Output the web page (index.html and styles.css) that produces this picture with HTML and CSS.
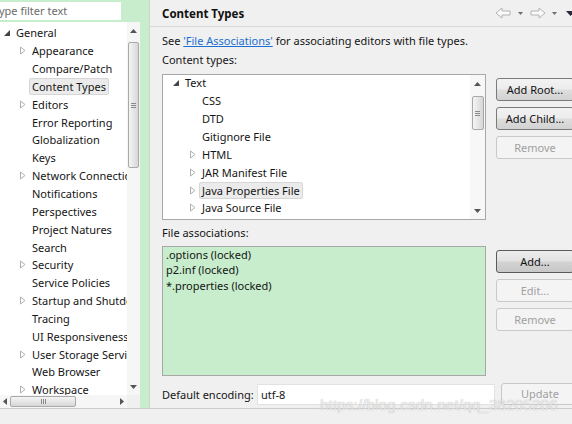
FILE: index.html
```html
<!DOCTYPE html>
<html>
<head>
<meta charset="utf-8">
<link rel="stylesheet" href="styles.css">
</head>
<body>
<div class="main">
  <div class="left">
    <div class="filter"><div class="filter-input"><span>type filter text</span></div></div>
    <div class="tree-wrap">
      <div class="tree-body">
        <div class="tree">
          <div class="row l0"><span class="tw"><svg width="6" height="6"><path d="M6 0 L6 6 L0 6 Z" fill="#444"/></svg></span><span class="lbl">General</span></div>
          <div class="row l1"><span class="tw"><svg width="6" height="9"><path d="M0.5 1 L5 4.5 L0.5 8 Z" fill="#fff" stroke="#b0b0b0"/></svg></span><span class="lbl">Appearance</span></div>
          <div class="row l1"><span class="tw"></span><span class="lbl">Compare/Patch</span></div>
          <div class="row l1"><span class="tw"></span><span class="lbl sel">Content Types</span></div>
          <div class="row l1"><span class="tw"><svg width="6" height="9"><path d="M0.5 1 L5 4.5 L0.5 8 Z" fill="#fff" stroke="#b0b0b0"/></svg></span><span class="lbl">Editors</span></div>
          <div class="row l1"><span class="tw"></span><span class="lbl">Error Reporting</span></div>
          <div class="row l1"><span class="tw"></span><span class="lbl">Globalization</span></div>
          <div class="row l1"><span class="tw"></span><span class="lbl">Keys</span></div>
          <div class="row l1"><span class="tw"><svg width="6" height="9"><path d="M0.5 1 L5 4.5 L0.5 8 Z" fill="#fff" stroke="#b0b0b0"/></svg></span><span class="lbl">Network Connections</span></div>
          <div class="row l1"><span class="tw"></span><span class="lbl">Notifications</span></div>
          <div class="row l1"><span class="tw"></span><span class="lbl">Perspectives</span></div>
          <div class="row l1"><span class="tw"></span><span class="lbl">Project Natures</span></div>
          <div class="row l1"><span class="tw"></span><span class="lbl">Search</span></div>
          <div class="row l1"><span class="tw"><svg width="6" height="9"><path d="M0.5 1 L5 4.5 L0.5 8 Z" fill="#fff" stroke="#b0b0b0"/></svg></span><span class="lbl">Security</span></div>
          <div class="row l1"><span class="tw"></span><span class="lbl">Service Policies</span></div>
          <div class="row l1"><span class="tw"><svg width="6" height="9"><path d="M0.5 1 L5 4.5 L0.5 8 Z" fill="#fff" stroke="#b0b0b0"/></svg></span><span class="lbl">Startup and Shutdown</span></div>
          <div class="row l1"><span class="tw"></span><span class="lbl">Tracing</span></div>
          <div class="row l1"><span class="tw"></span><span class="lbl">UI Responsiveness Monitoring</span></div>
          <div class="row l1"><span class="tw"><svg width="6" height="9"><path d="M0.5 1 L5 4.5 L0.5 8 Z" fill="#fff" stroke="#b0b0b0"/></svg></span><span class="lbl">User Storage Service</span></div>
          <div class="row l1"><span class="tw"></span><span class="lbl">Web Browser</span></div>
          <div class="row l1"><span class="tw"><svg width="6" height="9"><path d="M0.5 1 L5 4.5 L0.5 8 Z" fill="#fff" stroke="#b0b0b0"/></svg></span><span class="lbl">Workspace</span></div>
        </div>
        <div class="vscroll">
          <div class="arr"><svg width="7" height="4"><path d="M0 4 L3.5 0 L7 4 Z" fill="#555"/></svg></div>
          <div class="thumb tall"><span class="grip"></span></div>
          <div class="fill"></div>
          <div class="arr"><svg width="7" height="4"><path d="M0 0 L3.5 4 L7 0 Z" fill="#555"/></svg></div>
        </div>
      </div>
      <div class="hscroll">
        <div class="harr"><svg width="4" height="7"><path d="M4 0 L0 3.5 L4 7 Z" fill="#555"/></svg></div>
        <div class="hthumb"><span class="hgrip"></span></div>
        <div class="fill"></div>
        <div class="harr"><svg width="4" height="7"><path d="M0 0 L4 3.5 L0 7 Z" fill="#555"/></svg></div>
        <div class="corner"></div>
      </div>
    </div>
  </div>
  <div class="sash"></div>
  <div class="right">
    <div class="hdr">
      <span class="title">Content Types</span>
      <svg class="nav" width="80" height="14" viewBox="0 0 80 14">
        <path d="M2 7 L8 2 L8 5 L16 5 L16 9 L8 9 L8 12 Z" fill="#fbfbfb" stroke="#b3b3b3"/>
        <path d="M24 6 L29 6 L26.5 9 Z" fill="#6e6e6e"/>
        <path d="M51 7 L45 2 L45 5 L37 5 L37 9 L45 9 L45 12 Z" fill="#fbfbfb" stroke="#b3b3b3"/>
        <path d="M58 6 L63 6 L60.5 9 Z" fill="#6e6e6e"/>
        <path d="M72 5 L81 5 L76.5 10 Z" fill="#2a2a3a"/>
      </svg>
    </div>
    <div class="body">
      <div class="line">See <a class="link">'File Associations'</a> for associating editors with file types.</div>
      <div class="line lab">Content types:</div>
      <div class="section">
        <div class="listbox">
          <div class="ctree">
            <div class="crow c0"><span class="tw"><svg width="6" height="6"><path d="M6 0 L6 6 L0 6 Z" fill="#444"/></svg></span><span class="lbl">Text</span></div>
            <div class="crow c1"><span class="tw"></span><span class="lbl">CSS</span></div>
            <div class="crow c1"><span class="tw"></span><span class="lbl">DTD</span></div>
            <div class="crow c1"><span class="tw"></span><span class="lbl">Gitignore File</span></div>
            <div class="crow c1"><span class="tw"><svg width="6" height="9"><path d="M0.5 1 L5 4.5 L0.5 8 Z" fill="#fff" stroke="#b0b0b0"/></svg></span><span class="lbl">HTML</span></div>
            <div class="crow c1"><span class="tw"><svg width="6" height="9"><path d="M0.5 1 L5 4.5 L0.5 8 Z" fill="#fff" stroke="#b0b0b0"/></svg></span><span class="lbl">JAR Manifest File</span></div>
            <div class="crow c1"><span class="tw"><svg width="6" height="9"><path d="M0.5 1 L5 4.5 L0.5 8 Z" fill="#fff" stroke="#b0b0b0"/></svg></span><span class="lbl sel">Java Properties File</span></div>
            <div class="crow c1"><span class="tw"><svg width="6" height="9"><path d="M0.5 1 L5 4.5 L0.5 8 Z" fill="#fff" stroke="#b0b0b0"/></svg></span><span class="lbl">Java Source File</span></div>
          </div>
          <div class="vscroll small">
            <div class="arr"><svg width="7" height="4"><path d="M0 4 L3.5 0 L7 4 Z" fill="#555"/></svg></div>
            <div class="thumb short"><span class="grip"></span></div>
            <div class="fill"></div>
            <div class="arr"><svg width="7" height="4"><path d="M0 0 L3.5 4 L7 0 Z" fill="#555"/></svg></div>
          </div>
        </div>
        <div class="btns">
          <div class="btn">Add Root...</div>
          <div class="btn">Add Child...</div>
          <div class="btn dis">Remove</div>
        </div>
      </div>
      <div class="line lab2">File associations:</div>
      <div class="section sec2">
        <div class="assoc">
          <div class="arow">.options (locked)</div>
          <div class="arow">p2.inf (locked)</div>
          <div class="arow">*.properties (locked)</div>
        </div>
        <div class="btns b2">
          <div class="btn def">Add...</div>
          <div class="btn dis">Edit...</div>
          <div class="btn dis">Remove</div>
        </div>
      </div>
      <div class="enc">
        <span class="enc-lbl">Default encoding:</span>
        <div class="enc-input">utf-8</div>
        <div class="btn dis upd">Update</div>
      </div>
    </div>
  </div>
</div>
<div class="status"></div>
<div class="watermark">https://blog.csdn.net/qq_38205206</div>
</body>
</html>
```
FILE: styles.css
```css
* { box-sizing: border-box; }
html, body { margin: 0; padding: 0; }
body {
  width: 572px;
  height: 424px;
  overflow: hidden;
  background: #f0f0f0;
  font-family: "Noto Sans", "Open Sans", sans-serif;
  font-size: 11px;
  color: #151515;
  position: relative;
}
.main {
  display: flex;
  height: 409px;
  border-bottom: 1px solid #cdcdcd;
}
.left {
  width: 140px;
  flex: none;
  background: #c7edcc;
  display: flex;
  flex-direction: column;
}
.filter { height: 22px; padding: 2px 19px 2px 0; }
.filter-input {
  background: #fff;
  height: 18px;
  line-height: 18px;
  color: #6a6a6a;
  overflow: hidden;
  white-space: nowrap;
}
.filter-input span { margin-left: -5px; }
.tree-wrap {
  flex: 1;
  background: #fff;
  display: flex;
  flex-direction: column;
  min-height: 0;
}
.tree-body { flex: 1; display: flex; min-height: 0; }
.tree { flex: 1; padding-top: 2px; overflow: hidden; min-width: 0; }
.row {
  height: 17.85px;
  display: flex;
  align-items: center;
  white-space: nowrap;
}
.row.l0 { padding-left: 1px; }
.row.l1 { padding-left: 17px; }
.tw {
  width: 12px;
  flex: none;
  display: flex;
  align-items: center;
  justify-content: center;
}
.tw svg { display: block; }
.lbl {
  padding: 0 2px;
  line-height: 15px;
  border: 1px solid transparent;
  border-radius: 2px;
}
.lbl.sel { background: #ebebeb; border-color: #d6d6d6; }

.vscroll {
  width: 13px;
  flex: none;
  background: #f6f6f6;
  display: flex;
  flex-direction: column;
  align-items: center;
}
.vscroll .arr {
  height: 17px;
  flex: none;
  display: flex;
  align-items: center;
  justify-content: center;
}
.vscroll .arr svg { display: block; }
.fill { flex: 1; }
.thumb {
  width: 11px;
  margin-top: 3px;
  border: 1px solid #a9a9a9;
  border-radius: 2px;
  background: linear-gradient(90deg, #f4f4f4, #e6e6e6 50%, #d6d6d6);
  display: flex;
  align-items: center;
  justify-content: center;
}
.thumb.tall { height: 126px; }
.grip {
  width: 5px;
  height: 5px;
  border-top: 1px solid #8a8a8a;
  border-bottom: 1px solid #8a8a8a;
  position: relative;
}
.grip::after {
  content: "";
  position: absolute;
  left: 0; right: 0; top: 1px;
  border-top: 1px solid #8a8a8a;
}
.hscroll {
  height: 13px;
  flex: none;
  display: flex;
  align-items: center;
  background: #f6f6f6;
}
.harr { width: 10px; display: flex; justify-content: center; align-items: center; }
.harr svg { display: block; }
.hthumb {
  width: 66px;
  height: 11px;
  border: 1px solid #a9a9a9;
  border-radius: 2px;
  background: linear-gradient(#f4f4f4, #e6e6e6 50%, #d6d6d6);
  display: flex;
  align-items: center;
  justify-content: center;
}
.hgrip {
  width: 5px;
  height: 5px;
  border-left: 1px solid #8a8a8a;
  border-right: 1px solid #8a8a8a;
  position: relative;
}
.hgrip::after {
  content: "";
  position: absolute;
  top: 0; bottom: 0; left: 1px;
  border-left: 1px solid #8a8a8a;
}
.corner { width: 13px; height: 13px; background: #f0f0f0; }

.sash {
  width: 10px;
  flex: none;
  background: #c7edcc;
  border-right: 1px solid #d2d2d2;
}
.right {
  flex: 1;
  min-width: 0;
  display: flex;
  flex-direction: column;
  overflow: hidden;
}
.hdr {
  height: 27px;
  flex: none;
  border-bottom: 1px solid #d8d8d8;
  display: flex;
  align-items: center;
  justify-content: space-between;
  padding-left: 12px;
}
.title { font-weight: bold; font-size: 11.5px; color: #111; }
.nav { display: block; margin-right: -2px; flex: none; }
.body {
  padding: 5px 0 0 12px;
  display: flex;
  flex-direction: column;
}
.line { line-height: 18px; height: 18px; white-space: nowrap; }
.lab { margin-top: 1px; }
.link { color: #1a6fd0; text-decoration: underline; }
.section { display: flex; gap: 10px; margin-top: 5px; }
.listbox {
  width: 324px;
  height: 146px;
  flex: none;
  border: 1px solid #a8a8a8;
  background: #fff;
  display: flex;
}
.ctree { flex: 1; overflow: hidden; margin-top: -1px; }
.crow {
  height: 17.86px;
  display: flex;
  align-items: center;
  white-space: nowrap;
}
.crow.c0 { padding-left: 7px; }
.crow.c1 { padding-left: 24px; }
.vscroll.small { width: 15px; background: #f7f7f7; }
.thumb.short { height: 34px; margin-top: 4px; width: 12px; }
.btns {
  display: flex;
  flex-direction: column;
  gap: 6px;
  padding-top: 4px;
  flex: none;
}
.btn {
  width: 78px;
  height: 23px;
  flex: none;
  border: 1px solid #7a7a7a;
  border-radius: 3px;
  background: linear-gradient(#f3f3f3, #ececec 48%, #dedede 52%, #d2d2d2);
  text-align: center;
  line-height: 21px;
  color: #111;
}
.btn.def {
  border-color: #5a5a5a;
  background: linear-gradient(#ededed, #e2e2e2 48%, #d3d3d3 52%, #c8c8c8);
}
.btn.dis {
  border-color: #c9c9c9;
  background: #f4f4f4;
  color: #a0a0a0;
}
.b2 { gap: 6px; }
.lab2 { margin-top: 4px; }
.sec2 { margin-top: 4px; }
.assoc {
  width: 324px;
  height: 130px;
  flex: none;
  border: 1px solid #a8a8a8;
  background: #c7edcc;
  padding: 0 3px;
}
.arow { line-height: 15.4px; white-space: nowrap; }
.enc {
  display: flex;
  align-items: center;
  margin-top: 7px;
  height: 22px;
}
.enc-lbl { width: 95px; flex: none; white-space: nowrap; }
.enc-input {
  width: 238px;
  height: 21px;
  flex: none;
  background: #fff;
  border: 1px solid #e2e2e2;
  line-height: 19px;
  padding-left: 3px;
}
.btn.upd { margin-left: 6px; height: 22px; line-height: 20px; }
.status { height: 15px; background: #f0f0f0; }
.watermark {
  position: absolute;
  left: 320px;
  top: 396px;
  font-family: "Liberation Sans", sans-serif;
  font-size: 15.5px;
  color: rgba(255, 255, 255, 0.7);
  text-shadow: 0 0 1px rgba(120, 120, 120, 0.6);
  white-space: nowrap;
  pointer-events: none;
}
```
